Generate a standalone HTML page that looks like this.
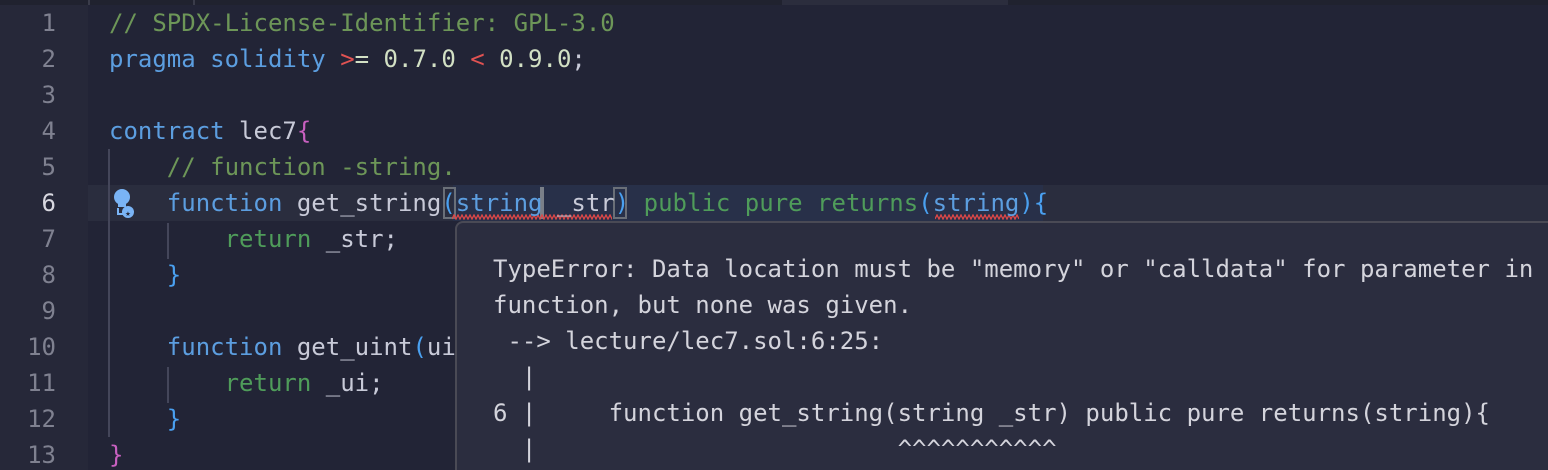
<!DOCTYPE html>
<html><head><meta charset="utf-8"><style>
html,body{margin:0;padding:0;width:1548px;height:470px;overflow:hidden;background:#222436;}
body{position:relative;font-family:"DejaVu Sans Mono","Liberation Mono",monospace;font-size:24px;}
.gut{position:absolute;left:0;top:0;width:88px;height:470px;background:#262839;}
.top{position:absolute;left:0;top:0;width:1548px;height:5px;background:#20222f;}
.ln{position:absolute;left:0;width:56px;text-align:right;color:#7f8190;line-height:36px;}
.code{position:absolute;left:109px;white-space:pre;line-height:36px;color:#c8cad8;}
.cur{position:absolute;left:88px;top:185px;width:1460px;height:36px;background:#2a2d3e;}
.sel{position:absolute;left:453px;top:185px;width:590px;height:36px;background:#283049;}
.k{color:#5c9ee0}.g{color:#6d9658}.r{color:#e05252}.n{color:#d2e0c4}.p{color:#c860c0}.b{color:#4aa0f0}.gr{color:#4f9c5a}.t{color:#7fb8a8}
.guide{position:absolute;width:2px;background:#44465a;}
.hover{position:absolute;left:455px;top:221px;width:1100px;height:260px;background:#2b2d3f;border-top:2px solid #4a4a55;border-left:2px solid #4a4a55;border-top-left-radius:8px;}
.ht{position:absolute;left:493px;top:251px;white-space:pre;color:#d4d4dc;line-height:36px;}
.sq{position:absolute;}
.box{position:absolute;top:187px;height:32px;border:2px solid #6a6f78;box-sizing:border-box;}
</style></head><body>
<div class="gut"></div>
<div class="top"></div>
<div style="position:absolute;left:88px;top:0;width:2px;height:5px;background:#3a3c4a"></div>
<div style="position:absolute;left:193px;top:0;width:2px;height:5px;background:#3a3c4a"></div>
<div style="position:absolute;left:782px;top:0;width:226px;height:5px;background:#2b2d3d"></div>
<div class="cur"></div>
<div class="sel"></div>
<div class="guide" style="left:108px;top:149px;height:288px;"></div>
<div class="guide" style="left:167px;top:223px;height:36px;"></div>
<div class="guide" style="left:167px;top:367px;height:36px;"></div>
<div class="box" style="left:443px;width:13px;"></div>
<div class="box" style="left:540px;width:4px;border-width:0;background:#7a7f88;"></div>
<div class="box" style="left:613px;width:14px;"></div>
<svg class="sq" style="left:452px;top:214px" width="160" height="6"><path d="M0 5 l2-4 l2 4 l2-4 l2 4 l2-4 l2 4 l2-4 l2 4 l2-4 l2 4 l2-4 l2 4 l2-4 l2 4 l2-4 l2 4 l2-4 l2 4 l2-4 l2 4 l2-4 l2 4 l2-4 l2 4 l2-4 l2 4 l2-4 l2 4 l2-4 l2 4 l2-4 l2 4 l2-4 l2 4 l2-4 l2 4 l2-4 l2 4 l2-4 l2 4 l2-4 l2 4 l2-4 l2 4 l2-4 l2 4 l2-4 l2 4 l2-4 l2 4 l2-4 l2 4 l2-4 l2 4 l2-4 l2 4 l2-4 l2 4 l2-4 l2 4 l2-4 l2 4 l2-4 l2 4 l2-4 l2 4 l2-4 l2 4 l2-4 l2 4 l2-4 l2 4 l2-4 l2 4 l2-4 l2 4 l2-4 l2 4 l2-4 l2 4 l2-4 l2 4 l2-4 l2 4 l2-4 l2 4 l2-4 l2 4 l2-4 l2 4 l2-4 l2 4" stroke="#e04848" stroke-width="1.3" fill="none"/></svg>
<svg class="sq" style="left:935px;top:214px" width="84" height="6"><path d="M0 5 l2-4 l2 4 l2-4 l2 4 l2-4 l2 4 l2-4 l2 4 l2-4 l2 4 l2-4 l2 4 l2-4 l2 4 l2-4 l2 4 l2-4 l2 4 l2-4 l2 4 l2-4 l2 4 l2-4 l2 4 l2-4 l2 4 l2-4 l2 4 l2-4 l2 4 l2-4 l2 4 l2-4 l2 4 l2-4 l2 4 l2-4 l2 4 l2-4 l2 4 l2-4 l2 4" stroke="#e04848" stroke-width="1.3" fill="none"/></svg>
<div class="ln" style="top:5px">1</div>
<div class="ln" style="top:41px">2</div>
<div class="ln" style="top:77px">3</div>
<div class="ln" style="top:113px">4</div>
<div class="ln" style="top:149px">5</div>
<div class="ln" style="top:185px;color:#d8d8e0">6</div>
<div class="ln" style="top:221px">7</div>
<div class="ln" style="top:257px">8</div>
<div class="ln" style="top:293px">9</div>
<div class="ln" style="top:329px">10</div>
<div class="ln" style="top:365px">11</div>
<div class="ln" style="top:401px">12</div>
<div class="ln" style="top:437px">13</div>
<svg style="position:absolute;left:110px;top:187px" width="30" height="32" viewBox="0 0 30 32">
<circle cx="12" cy="10" r="8" fill="#7ab4f5"/><rect x="8" y="15" width="8" height="5" fill="#7ab4f5"/>
<path d="M8 21v6h6" stroke="#7ab4f5" stroke-width="2" fill="none"/>
<circle cx="18" cy="25" r="6" fill="#7ab4f5"/><text x="18" y="29" font-size="9" text-anchor="middle" fill="#262839">★</text>
</svg>
<div class="code" style="top:5px"><span class="g">// SPDX-License-Identifier: GPL-3.0</span>
<span class="k">pragma solidity</span> <span class="r">&gt;</span><span class="n">= 0.7.0 </span><span class="r">&lt;</span><span class="n"> 0.9.0</span>;

<span class="k">contract</span> lec7<span class="p">{</span>
    <span class="g">// function -string.</span>
    <span class="k">function</span> get_string<span class="b">(</span><span class="k">string</span> _str<span class="b">)</span> <span class="gr">public pure returns</span><span class="b">(</span><span class="k">string</span><span class="b">){</span>
        <span class="gr">return</span> _str;
    <span class="b">}</span>

    <span class="k">function</span> get_uint<span class="b">(</span>ui
        <span class="gr">return</span> _ui;
    <span class="b">}</span>
<span class="p">}</span></div>
<div class="hover"></div>
<div class="ht">TypeError: Data location must be "memory" or "calldata" for parameter in
function, but none was given.
 --&gt; lecture/lec7.sol:6:25:
  |
6 |     function get_string(string _str) public pure returns(string){
  |                         ^^^^^^^^^^^</div>
</body></html>
